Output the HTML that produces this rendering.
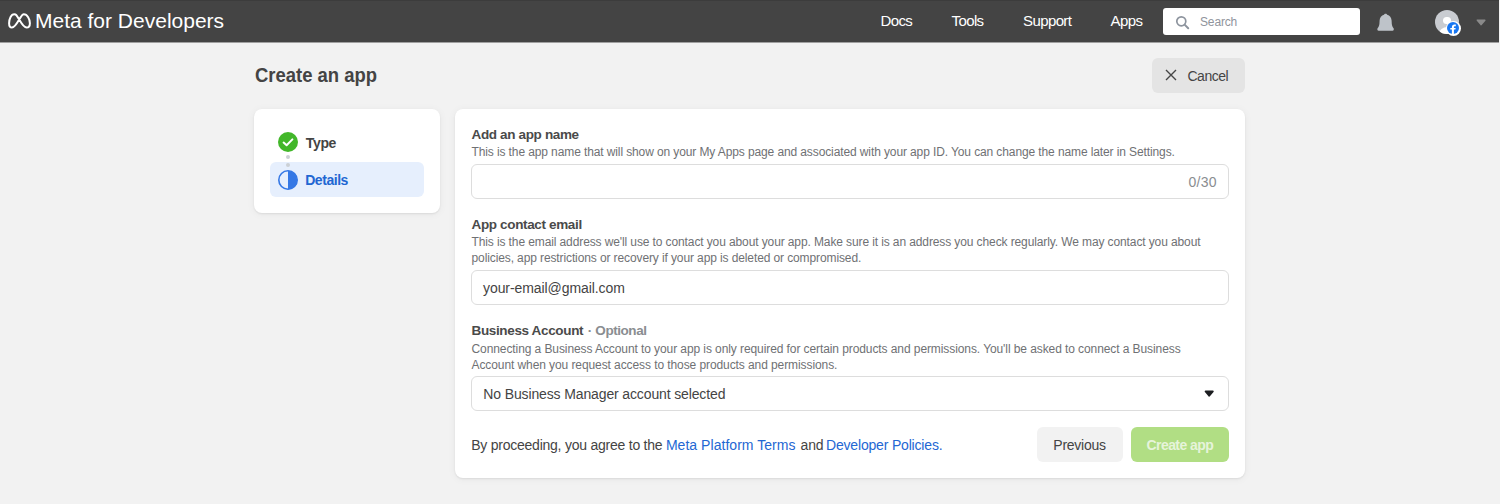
<!DOCTYPE html>
<html><head><meta charset="utf-8">
<style>
*{box-sizing:border-box;margin:0;padding:0}
html,body{width:1500px;height:504px;overflow:hidden;background:#f2f2f2;font-family:"Liberation Sans",sans-serif;color:#444}
.a{position:absolute;white-space:nowrap}
#hdr{position:absolute;left:0;top:0;width:1499px;height:42px;background:#444}
#hdrt{position:absolute;left:0;top:0;width:1499px;height:1px;background:#3c3c3c;z-index:5}
#hdrb{position:absolute;left:0;top:42px;width:1499px;height:1px;background:#a0a0a0}
.nav{position:absolute;top:12.2px;font-size:15px;color:#fff;line-height:18px;letter-spacing:-0.6px}
.card{position:absolute;background:#fff;border-radius:8px;box-shadow:0 1px 2px rgba(0,0,0,.08),0 1px 8px rgba(0,0,0,.05)}
.lbl{position:absolute;left:471.5px;font-size:13.5px;font-weight:bold;color:#4a4a4a;letter-spacing:-0.35px;line-height:16px;white-space:nowrap}
.desc{position:absolute;left:471.5px;font-size:12px;color:#6f7174;letter-spacing:-0.11px;line-height:16px;white-space:nowrap}
.inp{position:absolute;left:471px;width:758px;height:35px;border:1px solid #dddddd;border-radius:6px;background:#fff}
.t14{position:absolute;font-size:14px;line-height:16px;white-space:nowrap}
.blue{color:#2467d3}
</style></head><body>
<div id="hdrb"></div>
<div id="hdrt"></div>
<div id="hdr">
  <svg class="a" style="left:0;top:0" width="34" height="42" viewBox="0 0 34 42">
    <path d="M19.2 19.5 C21.3 16.2 22.2 14.3 23.8 14.3 C27.3 14.3 29.9 19 29.9 23.2 C29.9 26 28.6 27.6 26.6 27.6 C24.2 27.6 22.2 24.7 19.2 19.5 C16.2 14.3 15.9 14.3 14.3 14.3 C11 14.3 9.1 19 9.1 23.2 C9.1 26 10.4 27.6 12 27.6 C14.4 27.6 16.2 24.7 19.2 19.5 Z" fill="none" stroke="#fff" stroke-width="2"/>
  </svg>
  <div class="a" style="left:35px;top:9.2px;font-size:21px;line-height:24px;color:#fff">Meta for Developers</div>
  <div class="nav" style="left:880.5px">Docs</div>
  <div class="nav" style="left:951.5px">Tools</div>
  <div class="nav" style="left:1023px">Support</div>
  <div class="nav" style="left:1110.5px">Apps</div>
  <div class="a" style="left:1163px;top:8px;width:197px;height:27px;background:#fff;border-radius:3px"></div>
  <svg class="a" style="left:1175px;top:15px" width="16" height="16" viewBox="0 0 16 16"><circle cx="6.3" cy="6.3" r="4.5" fill="none" stroke="#8d949e" stroke-width="1.7"/><path d="M9.6 9.6 L13.2 13.2" stroke="#8d949e" stroke-width="2" stroke-linecap="round"/></svg>
  <div class="a" style="left:1200px;top:14.7px;font-size:12px;line-height:14px;color:#90949c;letter-spacing:-0.15px">Search</div>
  <svg class="a" style="left:1376px;top:13px" width="19" height="19" viewBox="0 0 19 19"><path d="M9.6 0.7 C10.5 0.7 11 1.2 11.2 1.8 C13.8 2.4 15.4 4.5 15.6 7.5 L15.8 11 C16 13 16.8 14.2 17.6 15.2 C18.1 16 17.8 17.6 16.6 17.8 L2.6 17.8 C1.3 17.6 1 16.2 1.6 15.3 C2.4 14.2 3.2 13 3.4 11 L3.6 7.5 C3.8 4.5 5.4 2.4 8 1.8 C8.2 1.2 8.7 0.7 9.6 0.7 Z" fill="#bec3c9"/></svg>
  <div class="a" style="left:1435px;top:10px;width:24px;height:24px;border-radius:50%;background:#c9ccd1;overflow:hidden">
    <div class="a" style="left:8.2px;top:6.8px;width:7.4px;height:7.4px;border-radius:50%;background:#fff"></div>
    <div class="a" style="left:3.5px;top:16.5px;width:17px;height:14px;border-radius:50%;background:#fff"></div>
  </div>
  <div class="a" style="left:1445.5px;top:20.5px;width:15px;height:15px;border-radius:50%;background:#fff"></div>
  <svg class="a" style="left:1447px;top:22px" width="12" height="12" viewBox="0 0 12 12"><circle cx="6" cy="6" r="6" fill="#1877f2"/><path d="M4.9 12 L4.9 7.6 L3.3 7.6 L3.3 5.9 L4.9 5.9 L4.9 5 C4.9 3.2 5.9 2.4 7.4 2.4 C8 2.4 8.5 2.5 8.8 2.6 L8.8 4.3 L8 4.3 C7.2 4.3 6.9 4.7 6.9 5.3 L6.9 5.9 L8.7 5.9 L8.4 7.6 L6.9 7.6 L6.9 12 Z" fill="#fff"/></svg>
  <svg class="a" style="left:1476px;top:19px" width="11" height="7" viewBox="0 0 11 7"><path d="M1.4 1.2 L8.8 1.2 L5.1 5.6 Z" fill="#8a8a8a" stroke="#8a8a8a" stroke-width="1.6" stroke-linejoin="round"/></svg>
</div>

<div class="a" style="left:254.5px;top:64px;font-size:20px;font-weight:bold;line-height:22px;color:#444;transform:scaleX(0.923);transform-origin:0 0">Create an app</div>
<div class="a" style="left:1152px;top:58px;width:93px;height:35px;background:#e4e4e4;border-radius:6px"></div>
<svg class="a" style="left:1165.4px;top:68.9px" width="12" height="12" viewBox="0 0 12 12"><path d="M1 1 L11 11 M11 1 L1 11" stroke="#454545" stroke-width="1.4"/></svg>
<div class="t14" style="left:1187.5px;top:67.5px;color:#444;letter-spacing:-0.5px">Cancel</div>

<div class="card" style="left:254px;top:109px;width:186px;height:104px"></div>
<div class="a" style="left:277.7px;top:132.4px;width:20px;height:20px;border-radius:50%;background:#42b72a"></div>
<svg class="a" style="left:277.7px;top:132.4px" width="20" height="20" viewBox="0 0 20 20"><path d="M5.6 10.6 L8.6 13.3 L14.4 7.4" fill="none" stroke="#fff" stroke-width="2" stroke-linecap="round" stroke-linejoin="round"/></svg>
<div class="t14" style="left:305.8px;top:134.5px;font-weight:bold;color:#444;letter-spacing:-0.35px">Type</div>
<div class="a" style="left:285.7px;top:155px;width:4px;height:4px;border-radius:50%;background:#ccd0d5"></div>
<div class="a" style="left:270px;top:161.5px;width:154px;height:35.5px;border-radius:6px;background:#e6effd"></div>
<div class="a" style="left:285.7px;top:163px;width:4px;height:4px;border-radius:50%;background:#ccd0d5"></div>
<svg class="a" style="left:277.7px;top:169.6px" width="20" height="20" viewBox="0 0 20 20"><circle cx="10" cy="10" r="9.2" fill="none" stroke="#3578e5" stroke-width="1.6"/><path d="M10 0.8 A9.2 9.2 0 0 1 10 19.2 Z" fill="#3578e5"/></svg>
<div class="t14" style="left:305.2px;top:171.8px;font-weight:bold;color:#2166d2;letter-spacing:-0.45px">Details</div>

<div class="card" style="left:455px;top:109px;width:790px;height:369px"></div>
<div class="lbl" style="top:126.7px">Add an app name</div>
<div class="desc" style="top:144.2px">This is the app name that will show on your My Apps page and associated with your app ID. You can change the name later in Settings.</div>
<div class="inp" style="top:164px"></div>
<div class="t14" style="left:1188.5px;top:174px;color:#8a8d91;letter-spacing:0.25px">0/30</div>

<div class="lbl" style="top:216.6px">App contact email</div>
<div class="desc" style="top:234.2px">This is the email address we'll use to contact you about your app. Make sure it is an address you check regularly. We may contact you about<br>policies, app restrictions or recovery if your app is deleted or compromised.</div>
<div class="inp" style="top:270px"></div>
<div class="t14" style="left:483px;top:280px;color:#444;letter-spacing:-0.08px">your-email@gmail.com</div>

<div class="lbl" style="top:322.9px">Business Account<span style="color:#8a8d91;margin-left:4.5px">·</span><span style="color:#8a8d91;margin-left:3.5px;letter-spacing:-0.45px">Optional</span></div>
<div class="desc" style="top:340.8px;letter-spacing:-0.087px">Connecting a Business Account to your app is only required for certain products and permissions. You'll be asked to connect a Business<br>Account when you request access to those products and permissions.</div>
<div class="inp" style="top:376px"></div>
<div class="t14" style="left:483.3px;top:386px;color:#444;letter-spacing:-0.13px">No Business Manager account selected</div>
<svg class="a" style="left:1204px;top:390px" width="11" height="8" viewBox="0 0 11 8"><path d="M1.6 1.5 L8.8 1.5 L5.2 5.7 Z" fill="#1c1e21" stroke="#1c1e21" stroke-width="1.9" stroke-linejoin="round"/></svg>

<div class="t14" style="left:471.2px;top:436.7px;color:#444;letter-spacing:-0.236px">By proceeding, you agree to the</div>
<div class="t14 blue" style="left:665.9px;top:436.7px;letter-spacing:0.04px">Meta Platform Terms</div>
<div class="t14" style="left:800.5px;top:436.7px;color:#444;letter-spacing:-0.136px">and</div>
<div class="t14 blue" style="left:826px;top:436.7px;letter-spacing:-0.18px">Developer Policies.</div>
<div class="a" style="left:1037px;top:427px;width:86px;height:35px;background:#f2f2f2;border-radius:6px"></div>
<div class="t14" style="left:1053.3px;top:437px;color:#444;letter-spacing:-0.24px">Previous</div>
<div class="a" style="left:1131px;top:427px;width:98px;height:35px;background:#b1de84;border-radius:6px"></div>
<div class="t14" style="left:1146.5px;top:436.5px;color:#e6f4da;font-weight:bold;letter-spacing:-0.57px">Create app</div>
</body></html>
